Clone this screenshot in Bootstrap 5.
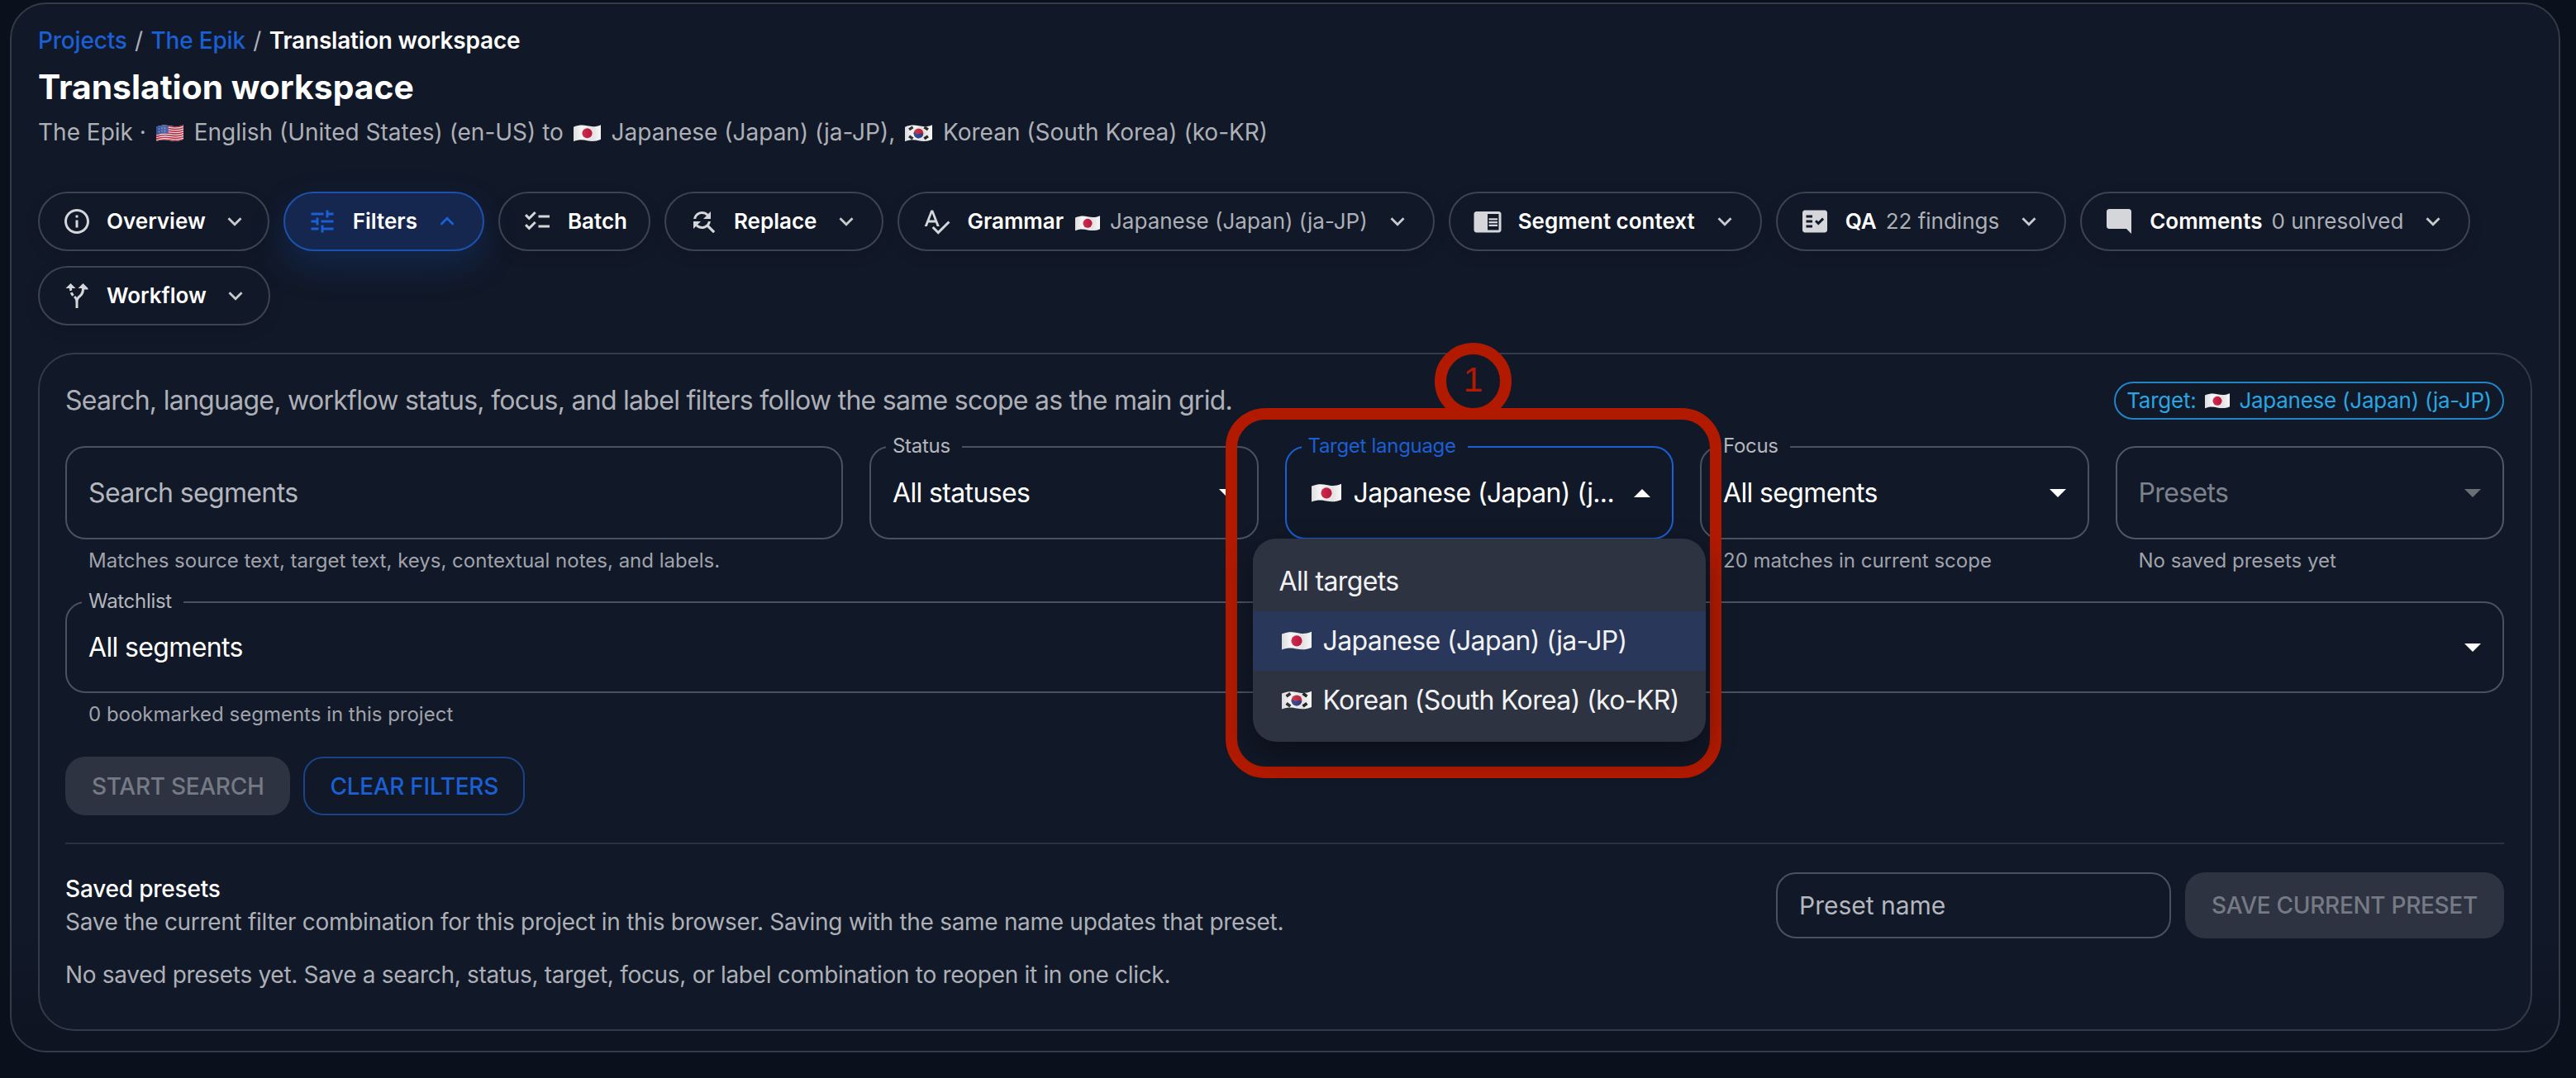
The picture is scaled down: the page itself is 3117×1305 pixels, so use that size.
<!DOCTYPE html>
<html lang="en">
<head>
  <meta charset="UTF-8">
  <meta name="viewport" content="width=device-width, initial-scale=1.0">
  <title>Translation workspace</title>
  <link href="https://cdn.jsdelivr.net/npm/bootstrap@5.3.3/dist/css/bootstrap.min.css" rel="stylesheet">
  <style>
    :root {
      --panel: #111827;
      --line: #343a48;
      --field-line: #4b5160;
      --muted: #adb0b7;
      --brand: #1a5fd4;
      --mark: #b21a00;
    }
    body {
      font-family: "Inter", "Noto Sans", sans-serif;
      background: #0b101d;
      color: #fff;
      min-height: 100vh;
      position: relative;
      overflow: hidden;
      padding: 3px 19px 29px 12px;
    }

    /* outer panel and header */
    .shell-panel {
      background: linear-gradient(180deg, var(--panel) 88%, #0e1422);
      border: 2px solid var(--line);
      border-radius: 44px;
      padding: 24px 32px;
    }
    .crumbs { font-size: 28px; line-height: 40px; font-weight: 500; margin: 0; letter-spacing: -.2px; --bs-breadcrumb-divider-color: var(--muted); --bs-breadcrumb-item-padding-x: 9.5px; --bs-breadcrumb-margin-bottom: 0; }
    .crumbs a { color: var(--brand); text-decoration: none; }
    .crumbs .breadcrumb-item.active { color: #fff; font-weight: 600; }
    .crumbs .breadcrumb-item + .breadcrumb-item::before { color: var(--muted); font-weight: 400; }
    .page-title { font-size: 40.8px; line-height: 52px; font-weight: 700; margin: 10px 0 9px; }
    .page-sub { font-size: 28px; line-height: 40px; color: var(--muted); margin: 0; }
    .flag { display: inline-block; vertical-align: -3px; width: 33px; height: 23px; margin: 0 5px 0 4px; flex: none; }

    /* tool chips */
    .chip-row { margin-top: 52px; gap: 18px 17px; }
    .tool-chip {
      height: 72px; display: inline-flex; align-items: center;
      padding: 0 26px 0 27px; gap: 19px;
      border: 2px solid #3d4350; border-radius: 36px;
      color: #fff; font-size: 26px; font-weight: 600; line-height: 1;
      box-shadow: 0 6px 18px rgba(0,0,0,.12);
    }
    .chip-row .tool-chip:first-child, .chip-row .tool-chip:last-child { gap: 18px; padding-right: 23px; }
    .tool-chip:hover, .tool-chip:active { color: #fff; border-color: #3d4350; }
    .tool-chip svg.ico { width: 36px; height: 36px; fill: #d4d6da; flex: none; }
    .tool-chip svg.chev { width: 34px; height: 34px; fill: #c8cacf; flex: none; }
    .chip-note { font-weight: 400; color: var(--muted); margin-left: -8px; }
    .chip-note .flag { width: 30px; height: 21px; margin: 0 12px 0 3px; vertical-align: -4px; }
    .tool-chip.is-open { background: #15274f; border-color: #1d51ad; box-shadow: 0 18px 44px rgba(26,90,210,.22); }
    .tool-chip.is-open svg.ico { fill: var(--brand); }
    .tool-chip.is-open svg.chev { fill: var(--brand); }

    /* filters card */
    .filter-card {
      margin-top: 33px; background: var(--panel);
      border: 2px solid var(--line); border-radius: 44px;
      padding: 33px 32px 46px 31px; color: #fff;
    }
    .filter-note { font-size: 32px; line-height: 40px; color: var(--muted); letter-spacing: -.0225em; }
    .target-tag {
      height: 46px; display: inline-flex; align-items: center;
      border: 2px solid #2284c4; border-radius: 23px; padding: 0 13px;
      font-size: 26px; font-weight: 400; color: #29a6e2; background: transparent; letter-spacing: -.25px;
    }
    .target-tag .flag { width: 30px; height: 21px; margin: 0 11px; }
    .filter-grid { margin-top: 32px; display: grid; grid-template-columns: 2fr 1fr 1fr 1fr 1fr; gap: 32px; }
    .field-box {
      position: relative; height: 113px; display: flex; align-items: center;
      padding: 0 26px; border: 2px solid var(--field-line); border-radius: 24px;
      background: transparent; color: #fff; font-size: 32px; box-shadow: none; letter-spacing: -.02em;
    }
    input.field-box::placeholder { color: #b4b7bd; opacity: 1; }
    input.field-box:focus { background: transparent; color: #fff; border-color: var(--field-line); box-shadow: none; }
    .field-tag {
      position: absolute; top: -16px; left: 18px; padding: 0 14px 0 8px;
      background: var(--panel); font-size: 24px; line-height: 28px; color: #b4b7bd; letter-spacing: -.3px;
    }
    .caret-down, .caret-up { position: absolute; right: 26px; top: 50%; width: 0; height: 0; margin-top: -5px; border-left: 10px solid transparent; border-right: 10px solid transparent; }
    .caret-down { border-top: 10px solid #fff; }
    .caret-up { border-bottom: 10px solid #fff; }
    .field-box.is-off { color: #7d828b; border-color: #525764; }
    .field-box.is-off .caret-down { border-top-color: #696e77; }
    .field-box.is-open { border-color: var(--brand); }
    .field-box.is-open .field-tag { color: var(--brand); }
    .field-box.is-open > .flag { width: 36px; height: 24px; margin: 0 15px 0 4px; }
    .value-clip { white-space: nowrap; }
    .field-help { margin: 10px 0 0 28px; font-size: 24px; line-height: 32px; color: #a0a3ab; }

    /* open select menu */
    .lang-menu {
      top: 110px; left: -41px; width: 548px; padding: 16px 0 14px;
      background: #2e3341; border: 0; border-radius: 28px; overflow: hidden;
      box-shadow: 0 14px 36px rgba(0,0,0,.4);
    }
    .lang-menu .dropdown-item { height: 72px; display: flex; align-items: center; padding: 0 32px; font-size: 32px; color: #f1f2f4; letter-spacing: -.02em; }
    .lang-menu .dropdown-item.active { background: #29385a; color: #f1f2f4; }
    .lang-menu .flag { width: 36px; height: 24px; margin: 0 14px 0 3px; }

    /* buttons */
    .watch-block { margin-top: 33px; }
    .watch-block .field-box { height: 111px; }
    .action-row { margin-top: 35px; gap: 16px; }
    .solid-off, .line-btn { height: 71px; display: inline-flex; align-items: center; justify-content: center; border-radius: 24px; font-size: 28px; font-weight: 500; text-transform: uppercase; letter-spacing: -.3px; }
    .solid-off, .solid-off:disabled { background: #2e3341; border: 0; color: #757a84; opacity: 1; padding: 0 32px; }
    .line-btn { border: 2px solid #1b4389; color: var(--brand); padding: 0 30px; }
    .line-btn:hover { color: var(--brand); border-color: #1b4389; }
    .card-rule { margin: 33px 0 34px; border: 0; border-top: 2px solid #2b3140; opacity: 1; }
    .preset-head { font-size: 28px; line-height: 40px; font-weight: 500; letter-spacing: -.2px; }
    .preset-text { font-size: 28px; line-height: 40px; color: var(--muted); margin: 0; letter-spacing: -.3px; }
    .preset-form { gap: 17px; align-items: stretch; height: 80px; }
    .preset-form input.field-box { width: 478px; height: 80px; padding: 0 26px; font-size: 30px; letter-spacing: 0; }
    .preset-form .solid-off { height: 80px; width: 386px; padding: 0; }
    .preset-empty { margin-top: 24px; }

    /* annotation over the screenshot */
    .mark-ring {
      position: absolute; left: 1736px; top: 415px; width: 93px; height: 93px;
      border: 14px solid var(--mark); border-radius: 50%; background: var(--panel);
      display: flex; align-items: center; justify-content: center; padding-bottom: 4px;
      font-family: "Liberation Sans", sans-serif; font-size: 43px; line-height: 1; color: var(--mark);
    }
    .mark-box { position: absolute; left: 1483px; top: 494px; width: 600px; height: 448px; border: 14px solid var(--mark); border-radius: 48px; pointer-events: none; }
    .flag-defs { position: absolute; width: 0; height: 0; }
  </style>
</head>
<body>
  <!-- flags -->
  <svg class="flag-defs" aria-hidden="true">
    <defs>
      <clipPath id="flagClip"><path d="M0 3.500C8 .5 13 1 18 2s11 2 18-1.200v19.200c-7 3-13 2.500-18 1.500S8 19.500 0 22.500z"/></clipPath>
      <linearGradient id="flagShade" x1="0" x2="1" y1="0" y2="0">
        <stop offset="0" stop-color="#000" stop-opacity=".1"/><stop offset=".3" stop-color="#fff" stop-opacity=".1"/><stop offset=".7" stop-color="#000" stop-opacity=".08"/><stop offset="1" stop-color="#fff" stop-opacity=".05"/>
      </linearGradient>
      <symbol id="flag-jp" viewBox="0 0 36 24">
        <g clip-path="url(#flagClip)"><rect width="36" height="24" fill="#f5f5f5"/><circle cx="18" cy="11.800" r="6.600" fill="#c9183f"/><rect width="36" height="24" fill="url(#flagShade)"/></g>
      </symbol>
      <symbol id="flag-us" viewBox="0 0 36 24">
        <g clip-path="url(#flagClip)"><rect width="36" height="24" fill="#f5f5f5"/>
          <g fill="none" stroke="#c3233c" stroke-width="1.700">
            <path id="usStripe" d="M0 4.300C8 1.300 13 1.800 18 2.800s11 2 18-1.200"/>
            <use href="#usStripe" y="3"/><use href="#usStripe" y="6"/><use href="#usStripe" y="9"/><use href="#usStripe" y="12"/><use href="#usStripe" y="15"/><use href="#usStripe" y="18"/>
          </g>
          <path d="M0 0h16v12.800C10 11.500 6 12 0 14z" fill="#3c5aa6"/>
          <g fill="#dfe6f5"><circle cx="3.500" cy="6" r=".6"/><circle cx="7.500" cy="5" r=".6"/><circle cx="11.500" cy="5" r=".6"/><circle cx="3.500" cy="10" r=".6"/><circle cx="7.500" cy="9" r=".6"/><circle cx="11.500" cy="9" r=".6"/></g>
          <rect width="36" height="24" fill="url(#flagShade)"/></g>
      </symbol>
      <symbol id="flag-kr" viewBox="0 0 36 24">
        <g clip-path="url(#flagClip)"><rect width="36" height="24" fill="#f5f5f5"/>
          <circle cx="18" cy="11.800" r="6.400" fill="#c9283e"/>
          <path d="M11.700 10.400a6.400 6.400 0 0 0 12.400 3.200c-1-2-3.500-2.500-5-1.200s-3.800 1-4.700-.6c-.5-.8-1.500-1.500-2.700-1.400z" fill="#27418f"/>
          <g fill="#222"><rect x="5" y="3.500" width="6" height="3.600" transform="rotate(-35 8 5.300)"/><rect x="25" y="3.500" width="6" height="3.600" transform="rotate(35 28 5.300)"/><rect x="5" y="15.500" width="6" height="3.600" transform="rotate(35 8 17.300)"/><rect x="25" y="15.500" width="6" height="3.600" transform="rotate(-35 28 17.300)"/></g>
          <rect width="36" height="24" fill="url(#flagShade)"/></g>
      </symbol>
    </defs>
  </svg>

  <div class="shell-panel">
    <nav aria-label="breadcrumb">
      <ol class="breadcrumb crumbs">
        <li class="breadcrumb-item"><a href="#">Projects</a></li>
        <li class="breadcrumb-item"><a href="#">The Epik</a></li>
        <li class="breadcrumb-item active" aria-current="page">Translation workspace</li>
      </ol>
    </nav>
    <h1 class="page-title">Translation workspace</h1>
    <p class="page-sub">The Epik · <svg class="flag"><use href="#flag-us"/></svg> English (United States) (en-US) to <svg class="flag"><use href="#flag-jp"/></svg> Japanese (Japan) (ja-JP), <svg class="flag"><use href="#flag-kr"/></svg> Korean (South Korea) (ko-KR)</p>

    <!-- toolbar -->
    <div class="d-flex flex-wrap chip-row">
      <button class="btn tool-chip" type="button">
        <svg class="ico" viewBox="0 0 24 24"><path d="M11 7h2v2h-2zm0 4h2v6h-2zm1-9C6.480 2 2 6.480 2 12s4.480 10 10 10 10-4.480 10-10S17.520 2 12 2zm0 18c-4.410 0-8-3.590-8-8s3.590-8 8-8 8 3.590 8 8-3.590 8-8 8z"/></svg>
        Overview
        <svg class="chev" viewBox="0 0 24 24"><path d="M7.410 8.590 12 13.170l4.590-4.580L18 10l-6 6-6-6z"/></svg>
      </button>
      <button class="btn tool-chip is-open" type="button">
        <svg class="ico" viewBox="0 0 24 24"><path d="M3 17v2h6v-2H3zM3 5v2h10V5H3zm10 16v-2h8v-2h-8v-2h-2v6h2zM7 9v2H3v2h4v2h2V9H7zm14 4v-2H11v2h10zm-6-4h2V7h4V5h-4V3h-2v6z"/></svg>
        Filters
        <svg class="chev" viewBox="0 0 24 24"><path d="M12 8l-6 6 1.410 1.410L12 10.830l4.590 4.580L18 14z"/></svg>
      </button>
      <button class="btn tool-chip" type="button">
        <svg class="ico" viewBox="0 0 24 24"><path d="M22 7h-9v2h9V7zm0 8h-9v2h9v-2zM5.540 11 2 7.460l1.410-1.410 2.120 2.120 4.240-4.240 1.410 1.410L5.540 11zm0 8L2 15.460l1.410-1.410 2.120 2.120 4.240-4.240 1.410 1.410L5.540 19z"/></svg>
        Batch
      </button>
      <button class="btn tool-chip" type="button">
        <svg class="ico" viewBox="0 0 24 24"><path d="M11 6c1.380 0 2.630.56 3.540 1.460L12 10h6V4l-2.050 2.050C14.680 4.780 12.930 4 11 4c-3.530 0-6.430 2.610-6.920 6H6.100c.46-2.280 2.480-4 4.900-4zm5.640 9.140c.66-.9 1.120-1.970 1.280-3.140H15.900c-.46 2.280-2.480 4-4.900 4-1.380 0-2.630-.56-3.540-1.460L10 12H4v6l2.050-2.050C7.320 17.220 9.070 18 11 18c1.550 0 2.980-.51 4.140-1.360L20 21.490 21.490 20l-4.850-4.860z"/></svg>
        Replace
        <svg class="chev" viewBox="0 0 24 24"><path d="M7.410 8.590 12 13.170l4.590-4.580L18 10l-6 6-6-6z"/></svg>
      </button>
      <button class="btn tool-chip" type="button">
        <svg class="ico" viewBox="0 0 24 24"><path d="M12.450 16h2.090L9.430 3H7.570L2.460 16h2.090l1.120-3h5.640l1.140 3zm-6.020-5L8.500 5.480 10.570 11H6.430zm15.160.59-8.090 8.090L9.830 16l-1.410 1.410 5.090 5.090L23 13l-1.410-1.410z"/></svg>
        Grammar
        <span class="chip-note"><svg class="flag"><use href="#flag-jp"/></svg>Japanese (Japan) (ja-JP)</span>
        <svg class="chev" viewBox="0 0 24 24"><path d="M7.410 8.590 12 13.170l4.590-4.580L18 10l-6 6-6-6z"/></svg>
      </button>
      <button class="btn tool-chip" type="button">
        <svg class="ico" viewBox="0 0 24 24"><path d="M13 12h7v1.500h-7zm0-2.500h7V11h-7zm0 5h7V16h-7zM21 4H3c-1.100 0-2 .9-2 2v13c0 1.100.9 2 2 2h18c1.100 0 2-.9 2-2V6c0-1.100-.9-2-2-2zm0 15h-9V6h9v13z"/></svg>
        Segment context
        <svg class="chev" viewBox="0 0 24 24"><path d="M7.410 8.590 12 13.170l4.590-4.580L18 10l-6 6-6-6z"/></svg>
      </button>
      <button class="btn tool-chip" type="button">
        <svg class="ico" viewBox="0 0 24 24"><path d="M20 3H4c-1.100 0-2 .9-2 2v14c0 1.100.9 2 2 2h16c1.100 0 2-.9 2-2V5c0-1.100-.9-2-2-2zM10 17H5v-2h5v2zm0-4H5v-2h5v2zm0-4H5V7h5v2zm4.820 6L12 12.160l1.410-1.410 1.410 1.420L17.990 9l1.420 1.420L14.820 15z"/></svg>
        QA
        <span class="chip-note">22 findings</span>
        <svg class="chev" viewBox="0 0 24 24"><path d="M7.410 8.590 12 13.170l4.590-4.580L18 10l-6 6-6-6z"/></svg>
      </button>
      <button class="btn tool-chip" type="button">
        <svg class="ico" viewBox="0 0 24 24"><path d="M21.990 4c0-1.100-.89-2-1.990-2H4c-1.100 0-2 .9-2 2v12c0 1.100.9 2 2 2h14l4 4-.01-18z"/></svg>
        Comments
        <span class="chip-note">0 unresolved</span>
        <svg class="chev" viewBox="0 0 24 24"><path d="M7.410 8.590 12 13.170l4.590-4.580L18 10l-6 6-6-6z"/></svg>
      </button>
      <button class="btn tool-chip" type="button">
        <svg class="ico" viewBox="0 0 24 24"><path d="M9.780 11.160l-1.420 1.420c-.68-.69-1.340-1.580-1.790-2.940l1.940-.49c.32.89.77 1.500 1.270 2.010zM11 6 7 2 3 6h3.020c.02.81.08 1.540.19 2.170l1.940-.49C8.080 7.200 8.030 6.630 8.020 6H11zm10 0-4-4-4 4h2.990c-.1 3.680-1.280 4.750-2.540 5.880-.5.44-1.010.92-1.450 1.550-.34-.49-.77-.98-1.320-1.450L9.370 13.400c.47.43 1.630 1.590 1.630 3.600v5h2v-5c0-2.020.71-2.660 1.790-3.630 1.380-1.240 3.080-2.780 3.200-6.370H21z"/></svg>
        Workflow
        <svg class="chev" viewBox="0 0 24 24"><path d="M7.410 8.590 12 13.170l4.590-4.580L18 10l-6 6-6-6z"/></svg>
      </button>
    </div>

    <!-- filters -->
    <section class="card filter-card">
      <div class="d-flex justify-content-between align-items-center">
        <div class="filter-note">Search, language, workflow status, focus, and label filters follow the same scope as the main grid.</div>
        <span class="badge target-tag">Target: <svg class="flag"><use href="#flag-jp"/></svg> Japanese (Japan) (ja-JP)</span>
      </div>

      <div class="filter-grid">
        <div>
          <input class="form-control field-box" type="text" placeholder="Search segments">
          <div class="field-help">Matches source text, target text, keys, contextual notes, and labels.</div>
        </div>
        <div>
          <div class="field-box"><span class="field-tag">Status</span>All statuses<span class="caret-down"></span></div>
        </div>
        <div>
          <div class="field-box is-open">
            <span class="field-tag">Target language</span>
            <svg class="flag"><use href="#flag-jp"/></svg>
            <span class="value-clip">Japanese (Japan) (j...</span>
            <span class="caret-up"></span>
            <ul class="dropdown-menu show lang-menu">
              <li><a class="dropdown-item" href="#">All targets</a></li>
              <li><a class="dropdown-item active" href="#"><svg class="flag"><use href="#flag-jp"/></svg>Japanese (Japan) (ja-JP)</a></li>
              <li><a class="dropdown-item" href="#"><svg class="flag"><use href="#flag-kr"/></svg>Korean (South Korea) (ko-KR)</a></li>
            </ul>
          </div>
        </div>
        <div>
          <div class="field-box"><span class="field-tag">Focus</span>All segments<span class="caret-down"></span></div>
          <div class="field-help">20 matches in current scope</div>
        </div>
        <div>
          <div class="field-box is-off">Presets<span class="caret-down"></span></div>
          <div class="field-help">No saved presets yet</div>
        </div>
      </div>

      <div class="watch-block">
        <div class="field-box"><span class="field-tag">Watchlist</span>All segments<span class="caret-down"></span></div>
        <div class="field-help">0 bookmarked segments in this project</div>
      </div>

      <div class="d-flex action-row">
        <button class="btn solid-off" type="button" disabled>Start search</button>
        <button class="btn line-btn" type="button">Clear filters</button>
      </div>

      <hr class="card-rule">

      <div class="d-flex justify-content-between">
        <div>
          <div class="preset-head">Saved presets</div>
          <p class="preset-text">Save the current filter combination for this project in this browser. Saving with the same name updates that preset.</p>
        </div>
        <div class="d-flex preset-form">
          <input class="form-control field-box" type="text" placeholder="Preset name">
          <button class="btn solid-off" type="button" disabled>Save current preset</button>
        </div>
      </div>
      <p class="preset-text preset-empty">No saved presets yet. Save a search, status, target, focus, or label combination to reopen it in one click.</p>
    </section>
  </div>

  <!-- annotation -->
  <div class="mark-ring">1</div>
  <div class="mark-box"></div>

  <script src="https://cdn.jsdelivr.net/npm/bootstrap@5.3.3/dist/js/bootstrap.bundle.min.js"></script>
</body>
</html>
